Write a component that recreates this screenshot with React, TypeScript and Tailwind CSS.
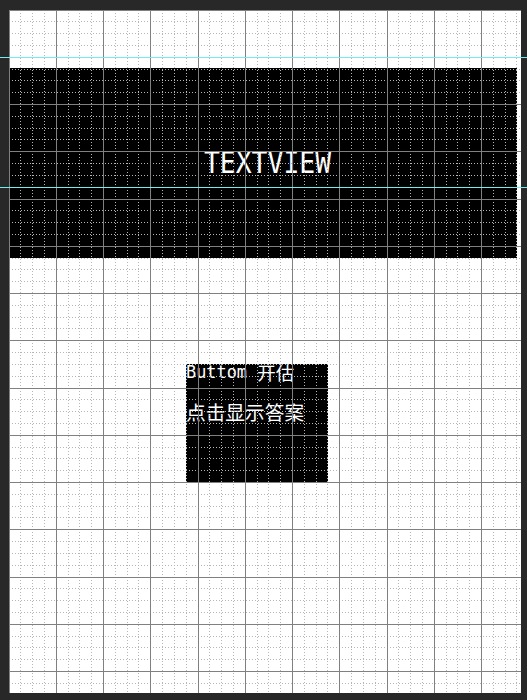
const MAJOR = 47.25;
const MINOR = MAJOR / 4;
const W = 512;
const H = 683;

// grid overlay drawn on top of the layout, like the editor's blueprint
const Grid = () => {
    const cols: number[] = [];
    for (let k = 0; k * MINOR < W; k++) cols.push(k);
    const rows: number[] = [];
    for (let k = 0; k * MINOR < H; k++) rows.push(k);

    const minorCols = cols.filter((k) => k % 4 !== 0);
    const majorCols = cols.filter((k) => k % 4 === 0);
    const minorRows = rows.filter((k) => k % 4 !== 0);
    const majorRows = rows.filter((k) => k % 4 === 0);

    return (
        <svg
            className="absolute inset-0 pointer-events-none"
            width={W}
            height={H}
            shapeRendering="crispEdges"
        >
            {minorCols.map((k) => {
                const x = Math.floor(k * MINOR) + 0.5;
                return <line key={"mv" + k} x1={x} x2={x} y1={0} y2={H} stroke="#b6b6b6" strokeDasharray="1 2" />;
            })}
            {minorRows.map((k) => {
                const y = Math.floor(k * MINOR) + 0.5;
                return <line key={"mh" + k} x1={0} x2={W} y1={y} y2={y} stroke="#b6b6b6" strokeDasharray="1 2" />;
            })}
            {majorCols.map((k) => {
                const x = Math.floor(k * MINOR) + 0.5;
                return <line key={"Mv" + k} x1={x} x2={x} y1={0} y2={H} stroke="#808080" />;
            })}
            {majorRows.map((k) => {
                const y = Math.floor(k * MINOR) + 0.5;
                return <line key={"Mh" + k} x1={0} x2={W} y1={y} y2={y} stroke="#808080" />;
            })}
        </svg>
    );
};

const App = () => {
    return (
        <div className="relative w-[527px] h-[700px] bg-[#282828] overflow-hidden">
            <div className="pt-[10px] pl-[9px]">
                <div className="relative w-[512px] h-[683px] bg-white flex flex-col pt-[58px]">
                    <div className="w-[508px] h-[190px] bg-black flex items-center justify-center pl-[9px]">
                        <span className="text-white text-[26.4px] leading-none scale-y-[1.12] font-['DejaVu_Sans_Mono',monospace]">
                            TEXTVIEW
                        </span>
                    </div>
                    <div className="ml-[177px] mt-[106px] w-[142px] h-[118px] bg-black text-white flex flex-col">
                        <div className="h-[17px] flex items-end whitespace-pre leading-none">
                            <span className="text-[16.9px] font-['DejaVu_Sans_Mono',monospace]">Buttom </span>
                            <span className="text-[18.5px] font-['Noto_Sans_CJK_SC',sans-serif]">开估</span>
                        </div>
                        <div className="mt-[21px] text-[19.7px] leading-none font-['Noto_Sans_CJK_SC',sans-serif]">
                            点击显示答案
                        </div>
                    </div>
                    <Grid />
                </div>
            </div>
            <div className="absolute left-0 top-[57px] w-full h-px bg-[#72eef0]" />
            <div className="absolute left-0 top-[187px] w-full h-px bg-[#72eef0]" />
        </div>
    );
};

export default App;
